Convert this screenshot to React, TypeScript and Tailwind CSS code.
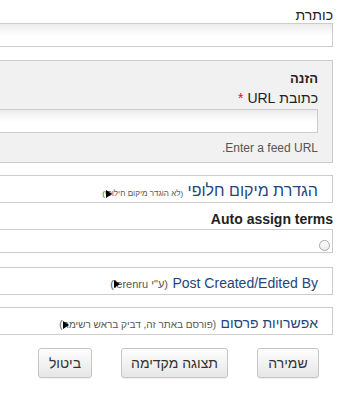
import React from "react";

const font = { fontFamily: '"Liberation Sans", "Open Sans", "DejaVu Sans Condensed", sans-serif' };

type CollapsedProps = {
  title: string;
  note: string;
  titleSize: string;
  noteSize: string;
};

function Collapsed({ title, note, titleSize, noteSize }: CollapsedProps) {
  return (
    <div className="h-[28px] border border-[#cccccc] bg-white pr-[14px] pt-[6px] text-right leading-[18px]">
      <span className={`text-[#23467a] ${titleSize}`}>{title}</span>{" "}
      <span className={`relative inline-block text-[#555] ${noteSize}`}>
        {note}
        <span className="absolute left-[4px] top-1/2 h-0 w-0 -translate-y-1/2 border-y-[4px] border-l-[6px] border-y-transparent border-l-black" />
      </span>
    </div>
  );
}

function Button({ label, width }: { label: string; width: string }) {
  return (
    <button
      className={`h-[30px] rounded-[3px] border border-[#c6c6c6] bg-[linear-gradient(to_bottom,#fefefe,#e6e6e6)] text-center text-[14px] text-[#333] shadow-[0_1px_1px_rgba(0,0,0,0.06)] ${width}`}
    >
      {label}
    </button>
  );
}

export default function App() {
  return (
    <div dir="rtl" className="flex h-[393px] w-[345px] justify-start overflow-hidden bg-white" style={font}>
      <div className="mr-3 w-[420px] shrink-0 pt-[7px] text-[#222]">
        {/* Title */}
        <div className="h-[16px] text-[14px] leading-[16px]">כותרת</div>
        <div className="h-[24px] border border-[#cccccc] bg-[linear-gradient(to_bottom,#ececec,#ffffff_55%)]" />

        {/* Feed fieldset */}
        <div className="mt-[13px] h-[103px] border border-[#cccccc] bg-[#f1f1f1] pr-[14px] pt-[10px]">
          <div className="text-[13px] font-bold leading-[16px]">הזנה</div>
          <div className="mt-[3px] text-[14px] leading-[17px]">
            כתובת URL <span className="text-[#e01010]">*</span>
          </div>
          <div className="mt-[2px] h-[24px] border border-[#cccccc] bg-[linear-gradient(to_bottom,#ececec,#ffffff_55%)]" />
          <div className="mt-[8px] text-[12px] leading-[14px] text-[#555]">Enter a feed URL.</div>
        </div>

        <div className="mt-[12px]">
          <Collapsed
            title="הגדרת מיקום חלופי"
            note="(לא הוגדר מיקום חילופי)"
            titleSize="text-[16px]"
            noteSize="text-[8px]"
          />
        </div>

        {/* Auto assign terms */}
        <div dir="ltr" className="mt-[7px] text-right text-[14px] font-bold leading-[18px] text-[#222]">
          Auto assign terms
        </div>
        <div className="mt-[1px] flex h-[24px] items-end border border-[#cccccc] bg-white pb-[1px] pr-[2px]">
          <span className="h-[11px] w-[11px] rounded-full border border-[#a8a8a8] bg-[linear-gradient(to_bottom,#ffffff,#ececec)]" />
        </div>

        <div className="mt-[14px]">
          <Collapsed
            title="Post Created/Edited By"
            note={'(ע"י lerenru)'}
            titleSize="text-[14px]"
            noteSize="text-[11px]"
          />
        </div>
        <div className="mt-[12px]">
          <Collapsed
            title="אפשרויות פרסום"
            note="(פורסם באתר זה, דביק בראש רשימה)"
            titleSize="text-[14px]"
            noteSize="text-[10px]"
          />
        </div>

        {/* Buttons */}
        <div className="mt-[13px] flex gap-[29px] pr-[14px]">
          <Button label="שמירה" width="w-[62px]" />
          <Button label="תצוגה מקדימה" width="w-[107px]" />
          <Button label="ביטול" width="w-[54px]" />
        </div>
      </div>
    </div>
  );
}
